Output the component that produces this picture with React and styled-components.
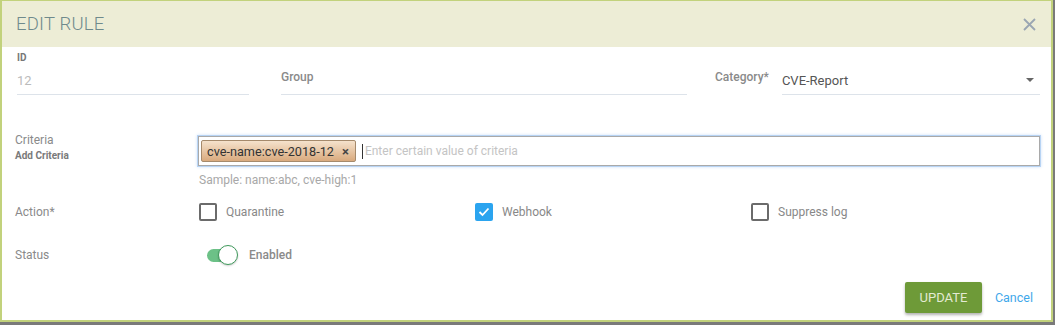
import React from "react";
import styled, { createGlobalStyle } from "styled-components";

const Global = createGlobalStyle`
  body {
    margin: 0;
    background: #7a7a7a;
    font-family: Roboto, "Liberation Sans", Arial, sans-serif;
  }
`;

const Dialog = styled.div`
  box-sizing: border-box;
  width: 1053px;
  height: 322px;
  background: #fff;
  border: 2px solid #c2d27c;
  border-top-width: 1px;
  display: flex;
  flex-direction: column;
`;

const Header = styled.div`
  height: 46px;
  background: #ededd6;
  display: flex;
  align-items: center;
  justify-content: space-between;
  padding: 0 15px 0 14px;
  font-size: 18.5px;
  font-weight: 300;
  color: #6f8a8c;
  letter-spacing: 0.2px;
`;

const Close = styled.button`
  border: 0;
  background: none;
  padding: 0;
  display: flex;
  cursor: pointer;
`;

const Body = styled.div`
  flex: 1;
  display: flex;
  flex-direction: column;
  padding: 0 11px 0 13px;
`;

const TopRow = styled.div`
  display: grid;
  grid-template-columns: 232px 406px 1fr;
  column-gap: 32px;
  padding-left: 2px;
  height: 48px;
`;

const Field = styled.div`
  display: flex;
  flex-direction: column;
  justify-content: flex-end;
  &:nth-child(3) {
    margin-left: -4px;
  }
`;

const TinyLabel = styled.div`
  font-size: 10px;
  font-weight: 700;
  color: #777;
  margin-bottom: 3px;
`;

const Underline = styled.div`
  display: flex;
  align-items: ${(p) => (p.$top ? "flex-start" : "center")};
  border-bottom: 1px solid #dde3ea;
  height: ${(p) => p.$h}px;
  font-size: ${(p) => (p.$top ? 12 : 13)}px;
  font-weight: ${(p) => (p.$top ? 500 : 400)};
  color: ${(p) => p.$color};
`;

const Inline = styled.div`
  display: flex;
  align-items: flex-end;
  height: 100%;
  gap: 13px;
`;

const InlineLabel = styled.div`
  font-size: 12px;
  font-weight: 500;
  color: #8a8a8a;
  padding-bottom: 11px;
`;

const Select = styled.div`
  flex: 1;
  display: flex;
  align-items: center;
  justify-content: space-between;
  height: 28px;
  border-bottom: 1px solid #dde3ea;
  font-size: 13px;
  color: #555;
  padding-right: 6px;
`;

const Caret = styled.span`
  width: 0;
  height: 0;
  border-left: 4px solid transparent;
  border-right: 4px solid transparent;
  border-top: 4px solid #666;
`;

const Row = styled.div`
  display: flex;
  align-items: ${(p) => p.$align || "center"};
  margin-top: ${(p) => p.$top}px;
`;

const SideLabel = styled.div`
  width: 183px;
  flex: none;
  font-size: 12px;
  color: #8a8a8a;
  margin-top: ${(p) => p.$shift || 0}px;
`;

const SubLabel = styled.div`
  font-size: 10px;
  font-weight: 700;
  color: #7a7a7a;
  margin-top: 3px;
`;

const TagWrap = styled.div`
  flex: 1;
  display: flex;
  flex-direction: column;
`;

const TagBox = styled.div`
  box-sizing: border-box;
  height: 30px;
  border: 1px solid #a9a9a9;
  box-shadow: 0 0 0 1px #b8d4f4, 0 0 3px 1px #cfe2fa;
  display: flex;
  align-items: center;
  padding: 0 2px;
  gap: 6px;
`;

const Tag = styled.span`
  box-sizing: border-box;
  height: 22px;
  display: inline-flex;
  align-items: center;
  gap: 8px;
  padding: 0 6px 0 5px;
  border: 1px solid #a58a6c;
  border-radius: 2px;
  background: linear-gradient(#f5e2cc, #d9aa7e);
  font-size: 12.7px;
  color: #333;
`;

const TagX = styled.span`
  font-size: 13px;
  font-weight: 700;
  color: #444;
`;

const Cursor = styled.span`
  width: 1px;
  height: 15px;
  background: #333;
`;

const Placeholder = styled.span`
  font-size: 12px;
  color: #c4c4c4;
  margin-left: -4px;
`;

const Hint = styled.div`
  font-size: 12px;
  color: #a8a8a8;
  margin-top: 7px;
  padding-left: 1px;
`;

const Options = styled.div`
  display: grid;
  grid-template-columns: 276px 276px 1fr;
  flex: 1;
  padding-left: 1px;
`;

const Option = styled.label`
  display: flex;
  align-items: center;
  gap: 9px;
  font-size: 12px;
  color: #888;
`;

const Box = styled.span`
  box-sizing: border-box;
  width: 18px;
  height: 18px;
  border-radius: 2px;
  border: ${(p) => (p.$on ? "0" : "2px solid #6b6b6b")};
  background: ${(p) => (p.$on ? "#2ba4ef" : "#fff")};
  display: flex;
  align-items: center;
  justify-content: center;
`;

const Toggle = styled.span`
  position: relative;
  width: 28px;
  height: 13px;
  border-radius: 7px;
  background: #6cc187;
  margin-left: 9px;
  flex: none;
`;

const Knob = styled.span`
  position: absolute;
  right: -3px;
  top: -4px;
  box-sizing: border-box;
  width: 20px;
  height: 20px;
  border-radius: 50%;
  background: #fff;
  border: 1.5px solid #3f9a5c;
  box-shadow: 0 1px 2px rgba(0, 0, 0, 0.2);
`;

const ToggleText = styled.span`
  font-size: 12px;
  font-weight: 500;
  color: #8a8a8a;
  margin-left: 14px;
`;

const Footer = styled.div`
  margin-top: auto;
  display: flex;
  justify-content: flex-end;
  align-items: center;
  gap: 13px;
  padding: 0 7px 7px 0;
`;

const Primary = styled.button`
  width: 77px;
  height: 31px;
  border: 0;
  border-radius: 2px;
  background: #6e9a38;
  color: #e3ead3;
  font-family: inherit;
  font-size: 13px;
  box-shadow: 0 2px 3px rgba(0, 0, 0, 0.3);
`;

const Link = styled.button`
  border: 0;
  background: none;
  padding: 0;
  font-family: inherit;
  font-size: 12.5px;
  color: #3fa8ea;
`;

export default function App() {
  return (
    <>
      <Global />
      <Dialog>
        <Header>
          <span>EDIT RULE</span>
          <Close aria-label="close">
            <svg width="13" height="13" viewBox="0 0 13 13">
              <path d="M1 1L12 12M12 1L1 12" stroke="#9aa6b3" strokeWidth="1.8" />
            </svg>
          </Close>
        </Header>
        <Body>
          <TopRow>
            <Field>
              <TinyLabel>ID</TinyLabel>
              <Underline $h={28} $color="#bbb">12</Underline>
            </Field>
            <Field>
              <Underline $h={24} $top $color="#8a8a8a">
                Group
              </Underline>
            </Field>
            <Field>
              <Inline>
                <InlineLabel>Category*</InlineLabel>
                <Select>
                  <span>CVE-Report</span>
                  <Caret />
                </Select>
              </Inline>
            </Field>
          </TopRow>

          <Row $align="flex-start" $top={41}>
            <SideLabel $shift={-3}>
              Criteria
              <SubLabel>Add Criteria</SubLabel>
            </SideLabel>
            <TagWrap>
              <TagBox>
                <Tag>
                  cve-name:cve-2018-12
                  <TagX>×</TagX>
                </Tag>
                <Cursor />
                <Placeholder>Enter certain value of criteria</Placeholder>
              </TagBox>
              <Hint>Sample: name:abc, cve-high:1</Hint>
            </TagWrap>
          </Row>

          <Row $top={16}>
            <SideLabel>Action*</SideLabel>
            <Options>
              <Option>
                <Box />
                Quarantine
              </Option>
              <Option>
                <Box $on>
                  <svg width="12" height="10" viewBox="0 0 12 10">
                    <path d="M1.5 5L4.5 8L10.5 1.5" fill="none" stroke="#fff" strokeWidth="1.8" />
                  </svg>
                </Box>
                Webhook
              </Option>
              <Option>
                <Box />
                Suppress log
              </Option>
            </Options>
          </Row>

          <Row $top={27}>
            <SideLabel>Status</SideLabel>
            <Toggle>
              <Knob />
            </Toggle>
            <ToggleText>Enabled</ToggleText>
          </Row>

          <Footer>
            <Primary>UPDATE</Primary>
            <Link>Cancel</Link>
          </Footer>
        </Body>
      </Dialog>
    </>
  );
}
